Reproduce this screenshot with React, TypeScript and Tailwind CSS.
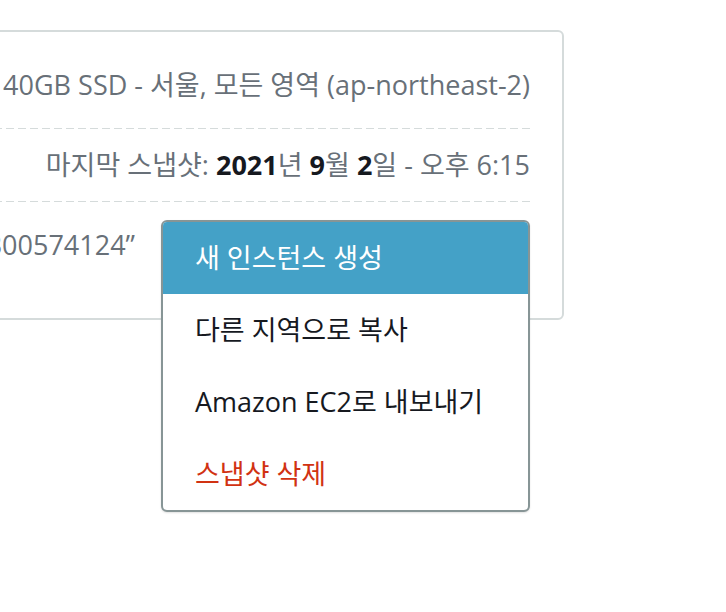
const font = "font-['Open_Sans','Noto_Sans_CJK_KR',sans-serif]";

const actions = [
  { label: '새 인스턴스 생성', active: true },
  { label: '다른 지역으로 복사' },
  { label: 'Amazon EC2로 내보내기' },
  { label: '스냅샷 삭제', danger: true },
];

function Dashed() {
  return <div className="h-px bg-[repeating-linear-gradient(90deg,#d5dbdb_0_8px,transparent_8px_12px)]" />;
}

function ActionMenu() {
  return (
    <div className="absolute left-[161px] top-[220px] w-[369px] overflow-hidden rounded-[6px] border-2 border-[#879596] bg-white shadow-[0_1px_2px_rgba(0,0,0,0.12)]">
      {actions.map((a) => (
        <div
          key={a.label}
          className={
            'flex h-[72px] items-center pl-[32px] text-[27px] ' +
            (a.active ? 'bg-[#44a1c7] text-white' : a.danger ? 'text-[#d13212]' : 'text-[#16191f]')
          }
        >
          {a.label}
        </div>
      ))}
    </div>
  );
}

export default function App() {
  return (
    <div className={`relative h-[612px] w-[726px] overflow-hidden bg-white ${font}`}>
      <div className="pt-[30px]">
        <div className="ml-[-500px] h-[290px] w-[1064px] rounded-[6px] border-2 border-[#d5dbdb] pr-[32px] text-[27px] text-[#687078]">
          <div className="flex h-[96px] items-end justify-end whitespace-nowrap pb-[27px] leading-[32px]">
            Bundle: 2 GB RAM, 1 vCPUs, 40GB SSD - 서울, 모든 영역 (ap-northeast-2)
          </div>
          <Dashed />
          <div className="flex h-[72px] items-center justify-end whitespace-nowrap leading-[32px]">
            <span>
              마지막 스냅샷: <b className="font-bold text-[#16191f]">2021</b>년{' '}
              <b className="font-bold text-[#16191f]">9</b>월{' '}
              <b className="font-bold text-[#16191f]">2</b>일 - 오후 6:15
            </span>
          </div>
          <Dashed />
          <div className="flex pt-[27px] leading-[32px]">
            <div className="w-[633px] whitespace-nowrap text-right">“LAMP_PHP_7-1-16300574124”</div>
          </div>
        </div>
      </div>
      <ActionMenu />
    </div>
  );
}
